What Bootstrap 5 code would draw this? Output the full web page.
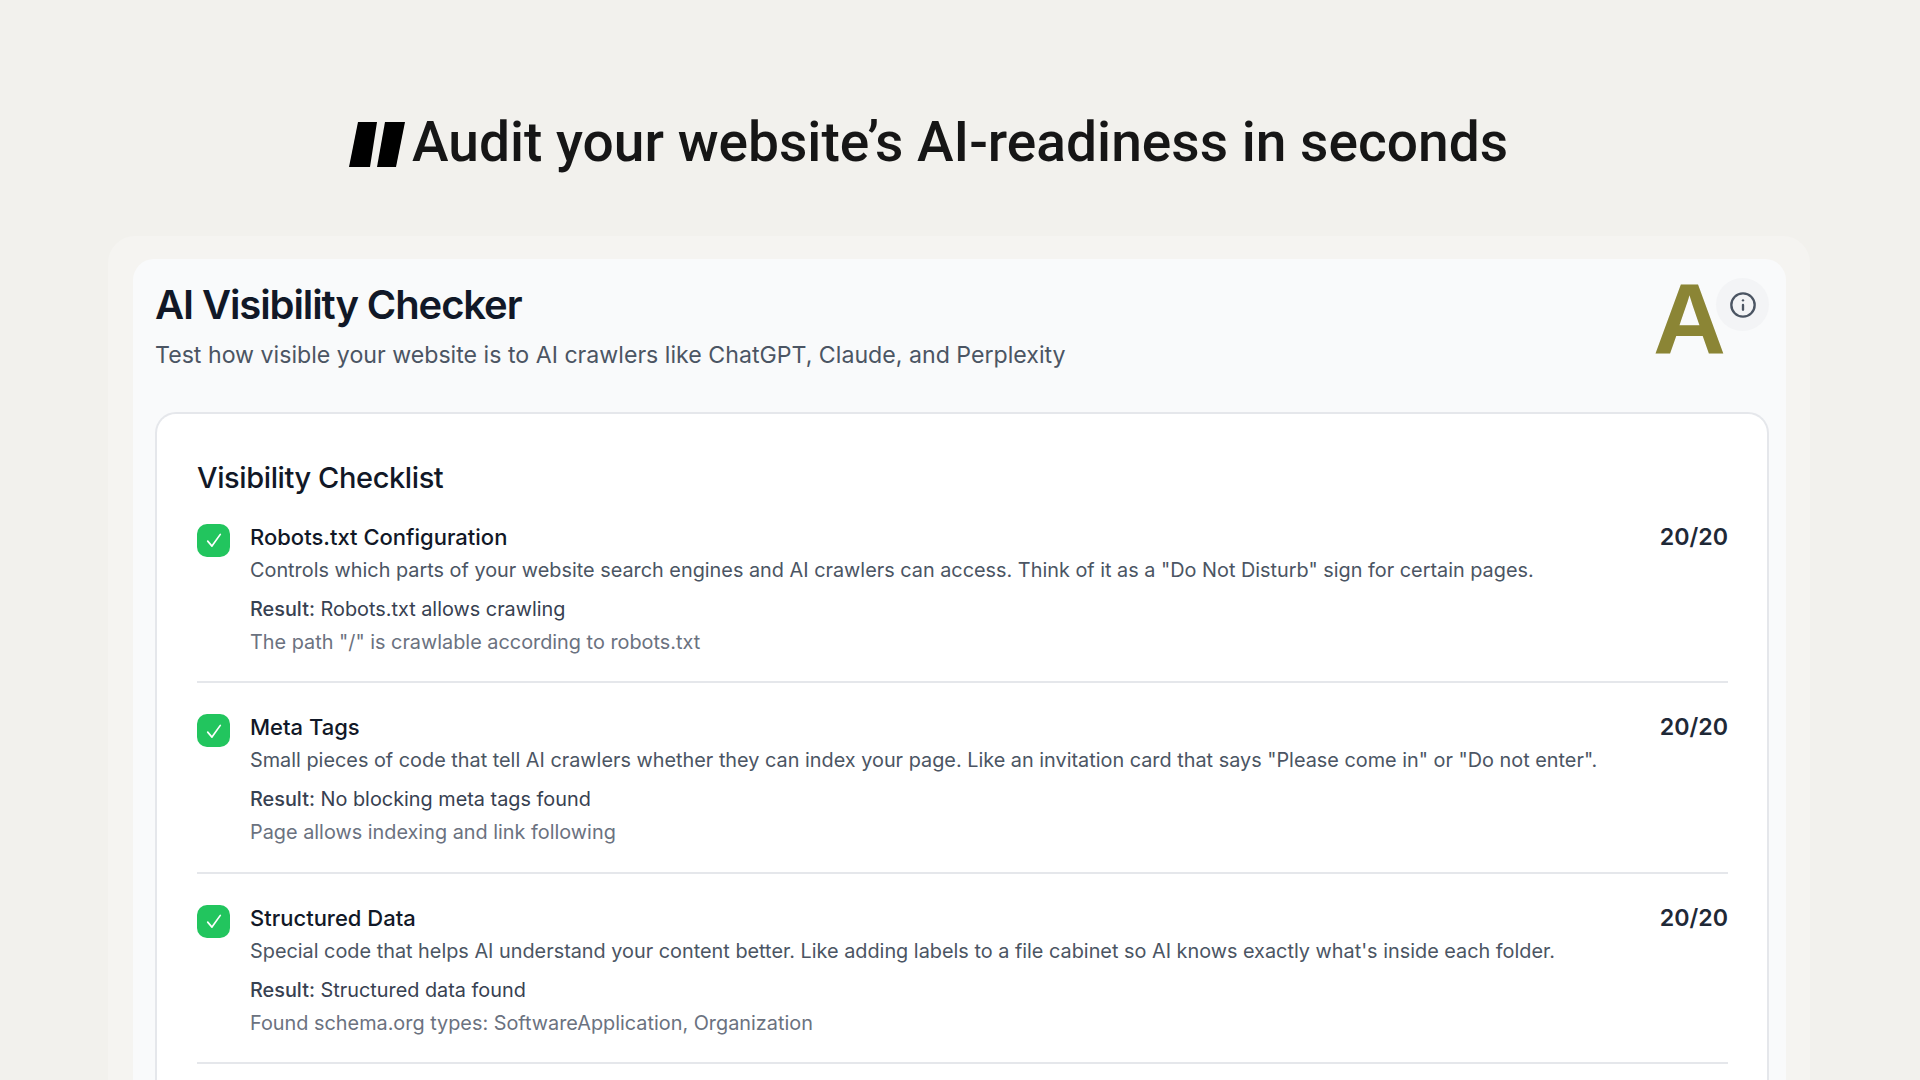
<!DOCTYPE html>
<html lang="en">
<head>
  <meta charset="UTF-8" />
  <meta name="viewport" content="width=device-width, initial-scale=1" />
  <title>AI Visibility Checker</title>
  <link href="https://cdn.jsdelivr.net/npm/bootstrap@5.3.3/dist/css/bootstrap.min.css" rel="stylesheet" />
  <style>
    html, body {
      height: 1080px;
      overflow: hidden;
    }

    body {
      background-color: #f2f1ed;
      font-family: "Inter", sans-serif;
    }

    .hero-line {
      height: 236px;
      padding-top: 108px;
      padding-left: 349px;
      gap: 7px;
    }

    .hero-mark {
      margin-top: 14px;
    }

    .hero-text {
      font-family: "Roboto", sans-serif;
      font-size: 55.1px;
      line-height: 68px;
      font-weight: 500;
      color: #161616;
      margin: 0;
    }

    .outer-panel {
      margin: 0 110px 0 108px;
      padding: 23px 24px 0 25px;
      background-color: #f5f4f1;
      border-radius: 27px 27px 0 0;
    }

    .inner-panel {
      padding: 22px 17px 0 23px;
      background-color: #f9fafb;
      border-radius: 21px 21px 0 0;
    }

    .checker-head {
      height: 131px;
    }

    .checker-title {
      font-size: 40px;
      line-height: 48px;
      font-weight: 600;
      color: #111827;
      letter-spacing: -1.1px;
      margin: 0 0 10px -1px;
    }

    .checker-sub {
      font-size: 23.17px;
      line-height: 32px;
      color: #4b5563;
      margin: 0 0 0 -1px;
    }

    .grade-letter {
      font-family: "Liberation Sans", sans-serif;
      font-size: 101px;
      line-height: 96px;
      font-weight: 700;
      color: #8b8535;
      margin: -10px -10px 0 0;
    }

    .info-btn {
      width: 53px;
      height: 53px;
      margin-top: -3px;
      background-color: #f3f4f6;
      border-radius: 50%;
    }

    .check-card {
      height: 800px;
      padding: 44px 39px 0 40px;
      margin-left: -1px;
      background-color: #fff;
      border: 2px solid #e5e7eb;
      border-bottom: 0;
      border-radius: 21px 21px 0 0;
    }

    .check-card h2 {
      font-size: 29px;
      line-height: 40px;
      font-weight: 500;
      color: #111827;
      letter-spacing: -0.4px;
      margin: 0 0 22.5px;
    }

    .check-row {
      height: 162.5px;
      gap: 20px;
      margin-bottom: 28px;
      border-bottom: 2px solid #e5e7eb;
    }

    .tick-box {
      width: 33px;
      height: 33px;
      margin-top: 3px;
      background-color: #22c55e;
      border-radius: 10px;
    }

    .item-name {
      font-size: 22px;
      line-height: 32px;
      font-weight: 500;
      color: #111827;
    }

    .item-score {
      font-size: 23.2px;
      line-height: 32px;
      font-weight: 600;
      color: #1f2937;
    }

    .item-desc {
      font-size: 19.85px;
      line-height: 32px;
      color: #4b5563;
      margin-top: 1px;
    }

    .item-result {
      font-size: 19.85px;
      line-height: 32px;
      color: #374151;
      margin-top: 7px;
    }

    .item-result b {
      font-weight: 500;
    }

    .item-note {
      font-size: 19.85px;
      line-height: 32px;
      color: #6b7280;
      margin-top: 1px;
    }
  </style>
</head>
<body>

<!-- Headline -->
<div class="hero-line d-flex align-items-start">
  <svg width="56" height="45" viewBox="0 0 56 45" class="hero-mark flex-shrink-0" aria-hidden="true">
    <polygon points="9,0 28,0 21,45 0,45" fill="#000" />
    <polygon points="36,0 56,0 47,45 28,45" fill="#000" />
  </svg>
  <h1 class="hero-text">Audit your website’s AI-readiness in seconds</h1>
</div>

<div class="outer-panel">
  <div class="inner-panel">

    <!-- Header -->
    <div class="checker-head d-flex justify-content-between align-items-start">
      <div>
        <h1 class="checker-title">AI Visibility Checker</h1>
        <p class="checker-sub">Test how visible your website is to AI crawlers like ChatGPT, Claude, and Perplexity</p>
      </div>
      <div class="d-flex align-items-start">
        <span class="grade-letter">A</span>
        <div class="info-btn d-flex align-items-center justify-content-center">
          <svg width="28" height="28" viewBox="0 0 24 24" fill="none" stroke="#4b5563" stroke-width="2" stroke-linecap="round" aria-hidden="true">
            <circle cx="12" cy="12" r="10" />
            <path d="M12 16v-4" />
            <path d="M12 8h.01" />
          </svg>
        </div>
      </div>
    </div>

    <!-- Checklist -->
    <div class="check-card">
      <h2>Visibility Checklist</h2>
      <div id="checkList"></div>
    </div>

  </div>
</div>

<script src="https://cdn.jsdelivr.net/npm/bootstrap@5.3.3/dist/js/bootstrap.bundle.min.js"></script>

<script>
  const checks = [
    {
      name: "Robots.txt Configuration",
      desc: 'Controls which parts of your website search engines and AI crawlers can access. Think of it as a "Do Not Disturb" sign for certain pages.',
      result: "Robots.txt allows crawling",
      note: 'The path "/" is crawlable according to robots.txt'
    },
    {
      name: "Meta Tags",
      desc: 'Small pieces of code that tell AI crawlers whether they can index your page. Like an invitation card that says "Please come in" or "Do not enter".',
      result: "No blocking meta tags found",
      note: "Page allows indexing and link following"
    },
    {
      name: "Structured Data",
      desc: "Special code that helps AI understand your content better. Like adding labels to a file cabinet so AI knows exactly what's inside each folder.",
      result: "Structured data found",
      note: "Found schema.org types: SoftwareApplication, Organization"
    }
  ];

  document.getElementById('checkList').innerHTML = checks.map(item => `
    <div class="check-row d-flex align-items-start">
      <div class="tick-box d-flex align-items-center justify-content-center flex-shrink-0">
        <svg width="18" height="18" viewBox="0 0 16 16" fill="none" stroke="#fff" stroke-width="1.5" stroke-linecap="round" stroke-linejoin="round" aria-hidden="true">
          <path d="M2.4 9 6.2 13.4 13.6 3" />
        </svg>
      </div>
      <div class="flex-grow-1">
        <div class="d-flex justify-content-between">
          <span class="item-name">${item.name}</span>
          <span class="item-score">20/20</span>
        </div>
        <div class="item-desc">${item.desc}</div>
        <div class="item-result"><b>Result:</b> ${item.result}</div>
        <div class="item-note">${item.note}</div>
      </div>
    </div>
  `).join('');
</script>

</body>
</html>
